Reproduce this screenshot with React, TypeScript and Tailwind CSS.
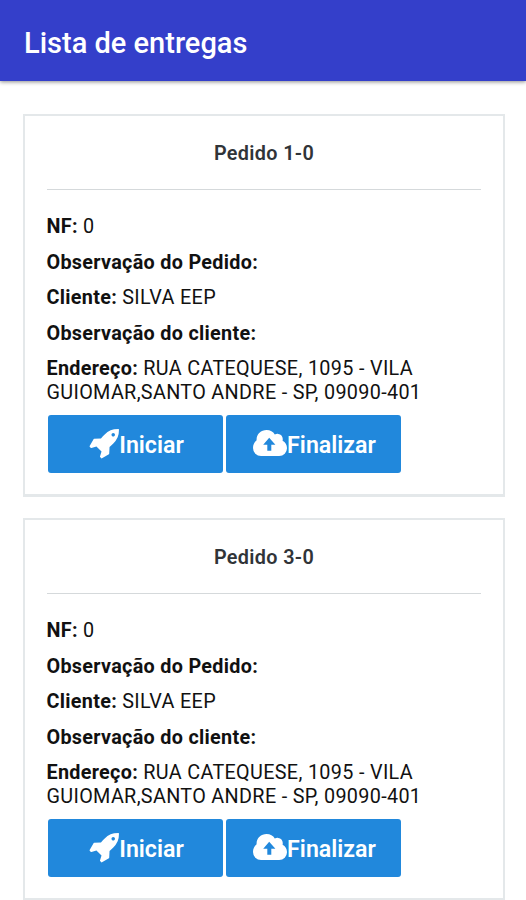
import type { ReactNode } from "react";

type Order = { id: string; invoice: string; customer: string; address: [string, string] };

const orders: Order[] = [
  { id: "1-0", invoice: "0", customer: "SILVA EEP", address: ["RUA CATEQUESE, 1095 - VILA", "GUIOMAR,SANTO ANDRE - SP, 09090-401"] },
  { id: "3-0", invoice: "0", customer: "SILVA EEP", address: ["RUA CATEQUESE, 1095 - VILA", "GUIOMAR,SANTO ANDRE - SP, 09090-401"] },
];

function RocketIcon() {
  return (
    <svg viewBox="0 128 1664 1664" className="h-[30px] w-[30px]" fill="currentColor" aria-hidden="true">
      <path d="M1440 448q0-40-28-68t-68-28-68 28-28 68 28 68 68 28 68-28 28-68zm224-288q0 249-75.5 430.5t-253.5 360.5q-81 80-195 176l-20 379q-2 16-16 26l-384 224q-7 4-16 4-12 0-23-9l-64-64q-13-14-8-32l85-276-281-281-276 85q-3 1-9 1-14 0-23-9l-64-64q-17-19-5-39l224-384q10-14 26-16l379-20q96-114 176-195 188-187 358-258t431-71q14 0 24 9.5t10 22.5z" />
    </svg>
  );
}

function CloudUploadIcon() {
  return (
    <svg viewBox="0 0 34 26" className="mb-[3px] h-[26px] w-[34px]" fill="currentColor" aria-hidden="true">
      <path
        fillRule="evenodd"
        d="M8 26A8 8 0 0 1 0 18C0 14.6 1.4 12 3.6 10.2C3.2 4.3 7.8 0 13.6 0C17.2 0 20.2 1.7 21.8 4.5C23 3.9 24.1 3.8 25.2 3.9C28.4 4.2 30.4 7 29.6 10.7C32.3 12 34 14.8 34 18.1A7.8 7.8 0 0 1 26.2 26ZM16.2 7.8L10.2 14.8H14.3V20.8H18.3V14.8H22.4Z"
      />
    </svg>
  );
}

function Field({ label, children }: { label: string; children?: ReactNode }) {
  return (
    <p className="mb-3 whitespace-nowrap">
      <b className="font-bold tracking-[0.3px]">{label}:</b> {children}
    </p>
  );
}

function ActionButton({ icon, label }: { icon: ReactNode; label: string }) {
  return (
    <button className="flex h-[58px] w-[175px] items-center justify-center rounded-[3px] bg-[#2188dc] pl-[2px] text-[23.2px] font-semibold text-white">
      {icon}
      <span className="pt-0.5">{label}</span>
    </button>
  );
}

function OrderCard({ order }: { order: Order }) {
  return (
    <section className="h-[383px] shrink-0 border-2 border-b-[3px] border-[#e4e8ea] bg-white px-[22px] pt-[26px]">
      <h2 className="text-center text-[19.8px] leading-6 font-semibold tracking-[0.35px] text-[#303438]">Pedido {order.id}</h2>
      <hr className="mt-[23px] mb-[25px] border-t-[1.5px] border-[#d5d9db]" />
      <div className="-ml-[0.5px] text-[19.8px] leading-[23.5px] tracking-[0.33px] text-[#111]">
        <Field label="NF">{order.invoice}</Field>
        <Field label="Observação do Pedido" />
        <Field label="Cliente">{order.customer}</Field>
        <Field label="Observação do cliente" />
        <Field label="Endereço">
          {order.address[0]}
          <br />
          {order.address[1]}
        </Field>
      </div>
      <div className="-mt-px ml-px flex gap-[3px]">
        <ActionButton icon={<RocketIcon />} label="Iniciar" />
        <ActionButton icon={<CloudUploadIcon />} label="Finalizar" />
      </div>
    </section>
  );
}

export default function App() {
  return (
    <div className="flex h-[900px] w-[526px] flex-col overflow-hidden bg-white font-['Roboto',sans-serif]">
      <header className="h-[81px] shrink-0 bg-[#343fca] px-6 pt-[27px] shadow-[0_1px_4px_rgba(0,0,0,0.45)]">
        <h1 className="text-[29px] leading-8 font-medium text-white">Lista de entregas</h1>
      </header>
      <main className="flex flex-col gap-[21px] pt-[33px] pr-[21px] pl-[23px]">
        {orders.map((order) => (
          <OrderCard key={order.id} order={order} />
        ))}
      </main>
    </div>
  );
}
